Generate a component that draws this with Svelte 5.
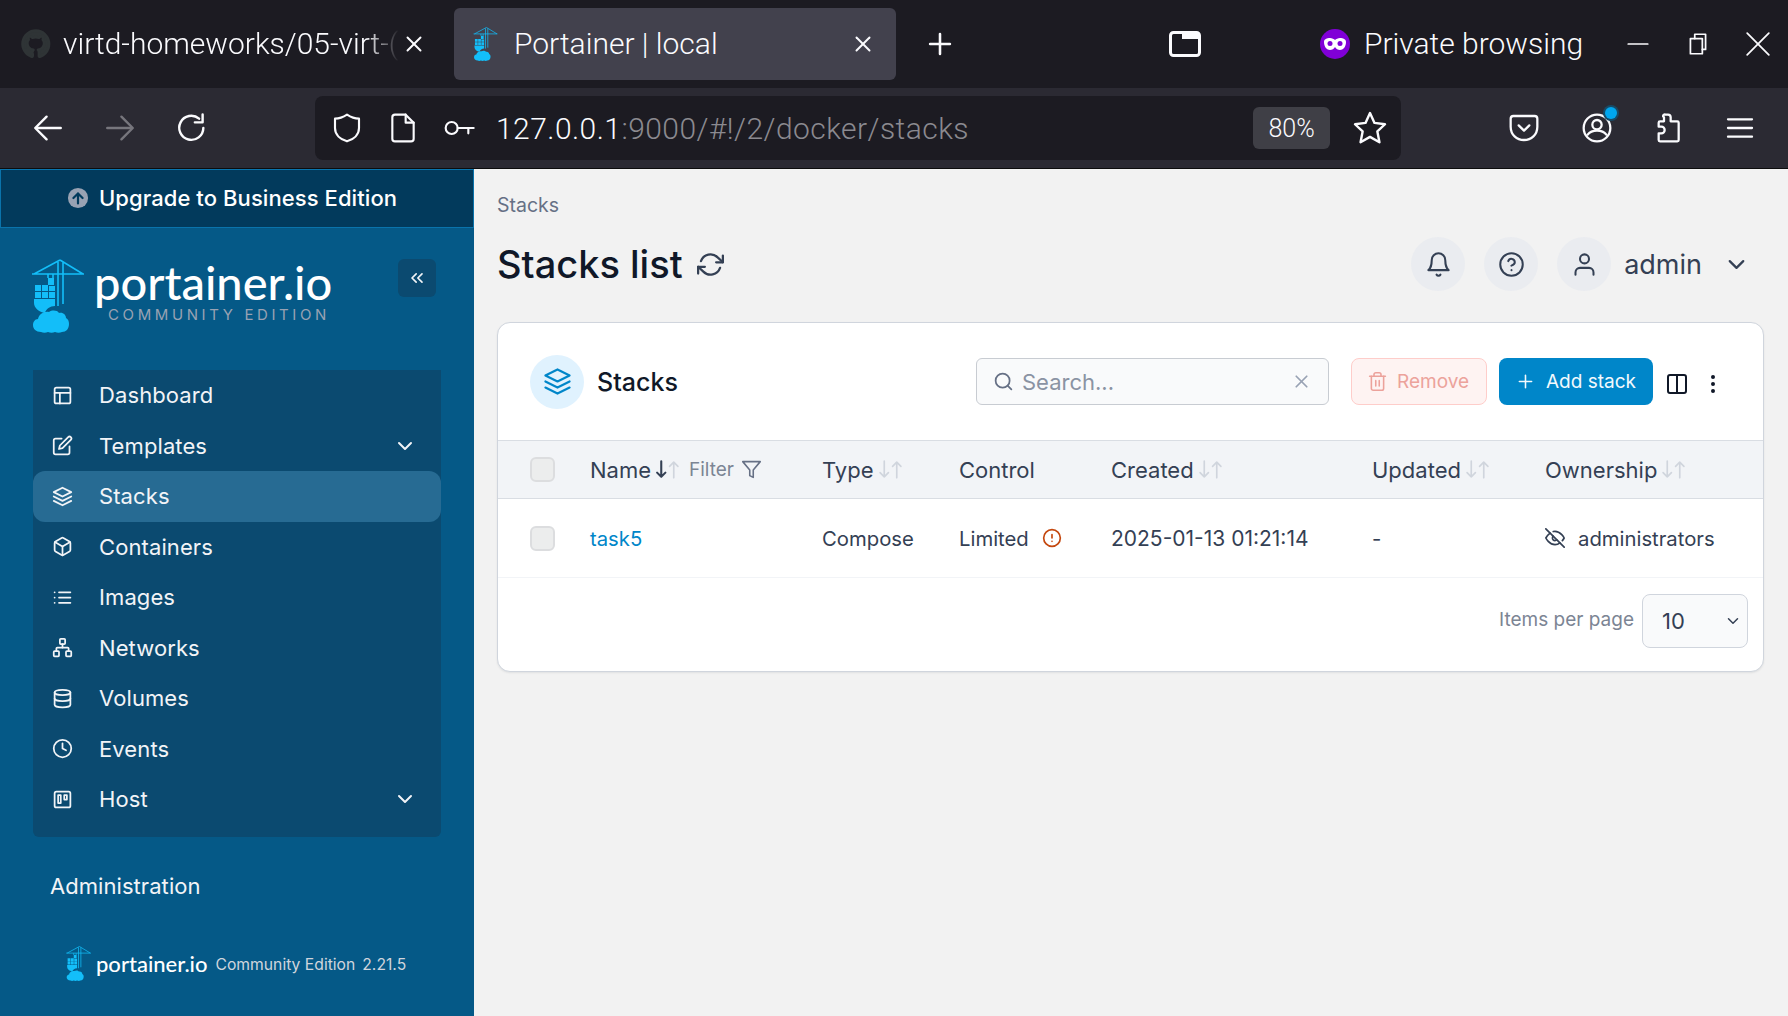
<script lang="ts">
const c = (x: number, y: number, r: number) => `M${x - r} ${y}a${r} ${r} 0 1 0 ${2 * r} 0a${r} ${r} 0 1 0 ${-2 * r} 0z`;
const box = 'M5 3h14a2 2 0 0 1 2 2v14a2 2 0 0 1-2 2H5a2 2 0 0 1-2-2V5a2 2 0 0 1 2-2z';

const icons: Record<string, string[]> = {
	layout: [box, 'M3 9h18', 'M9 21V9'],
	edit: ['M11 4H4a2 2 0 0 0-2 2v14a2 2 0 0 0 2 2h14a2 2 0 0 0 2-2v-7', 'M18.5 2.5a2.121 2.121 0 0 1 3 3L12 15l-4 1 1-4 9.5-9.5z'],
	layers: ['M12 2 2 7l10 5 10-5-10-5z', 'M2 17l10 5 10-5', 'M2 12l10 5 10-5'],
	box: ['M21 16V8a2 2 0 0 0-1-1.73l-7-4a2 2 0 0 0-2 0l-7 4A2 2 0 0 0 3 8v8a2 2 0 0 0 1 1.73l7 4a2 2 0 0 0 2 0l7-4A2 2 0 0 0 21 16z', 'M3.27 6.96 12 12.01l8.73-5.05', 'M12 22.08V12'],
	list: ['M8 6h13', 'M8 12h13', 'M8 18h13', 'M3 6h.01', 'M3 12h.01', 'M3 18h.01'],
	network: ['M17 16h4a1 1 0 0 1 1 1v4a1 1 0 0 1-1 1h-4a1 1 0 0 1-1-1v-4a1 1 0 0 1 1-1z', 'M3 16h4a1 1 0 0 1 1 1v4a1 1 0 0 1-1 1H3a1 1 0 0 1-1-1v-4a1 1 0 0 1 1-1z', 'M10 2h4a1 1 0 0 1 1 1v4a1 1 0 0 1-1 1h-4a1 1 0 0 1-1-1V3a1 1 0 0 1 1-1z', 'M5 16v-3a1 1 0 0 1 1-1h12a1 1 0 0 1 1 1v3', 'M12 12V8'],
	database: ['M12 2C7 2 3 3.3 3 5s4 3 9 3 9-1.3 9-3-4-3-9-3z', 'M21 12c0 1.66-4 3-9 3s-9-1.34-9-3', 'M3 5v14c0 1.66 4 3 9 3s9-1.34 9-3V5'],
	clock: [c(12, 12, 10), 'M12 6v6l4 2'],
	trello: [box, 'M7 7h3v9H7z', 'M14 7h3v5h-3z'],
	chevron: ['m6 9 6 6 6-6'],
	chevrons: ['m11 17-5-5 5-5', 'm18 17-5-5 5-5'],
	bell: ['M18 8A6 6 0 0 0 6 8c0 7-3 9-3 9h18s-3-2-3-9', 'M13.73 21a2 2 0 0 1-3.46 0'],
	help: [c(12, 12, 10), 'M9.09 9a3 3 0 0 1 5.83 1c0 2-3 3-3 3', 'M12 17h.01'],
	user: ['M20 21v-2a4 4 0 0 0-4-4H8a4 4 0 0 0-4 4v2', c(12, 7, 4)],
	search: [c(11, 11, 8), 'm21 21-4.35-4.35'],
	x: ['M18 6 6 18', 'm6 6 12 12'],
	trash: ['M3 6h18', 'M19 6v14a2 2 0 0 1-2 2H7a2 2 0 0 1-2-2V6', 'M8 6V4a2 2 0 0 1 2-2h4a2 2 0 0 1 2 2v2', 'M10 11v6', 'M14 11v6'],
	plus: ['M12 5v14', 'M5 12h14'],
	columns: [box, 'M12 3v18'],
	dots: [c(12, 5, 1), c(12, 12, 1), c(12, 19, 1)],
	filter: ['M22 3H2l8 9.46V19l4 2v-8.54L22 3z'],
	alert: [c(12, 12, 10), 'M12 8v4', 'M12 16h.01'],
	eyeoff: ['M17.94 17.94A10.07 10.07 0 0 1 12 20c-7 0-11-8-11-8a18.45 18.45 0 0 1 5.06-5.94M9.9 4.24A9.12 9.12 0 0 1 12 4c7 0 11 8 11 8a18.5 18.5 0 0 1-2.16 3.19m-6.72-1.07a3 3 0 1 1-4.24-4.24', 'M1 1l22 22'],
	refresh: ['M23 4v6h-6', 'M1 20v-6h6', 'M3.51 9a9 9 0 0 1 14.85-3.36L23 10M1 14l4.64 4.36A9 9 0 0 0 20.49 15'],
	// browser toolbar
	back: ['M21 12H4', 'M11 4l-8 8 8 8'],
	forward: ['M3 12h17', 'M13 4l8 8-8 8'],
	reload: ['M20 12a8.5 8.5 0 1 1-3-6.6', 'M19.5 2.5v5.5H14'],
	shield: ['M12 2c3 2 6 3 9 3v7c0 5-4 8.500-9 10-5-1.500-9-5-9-10V5c3 0 6-1 9-3z'],
	doc: ['M6 2h8l6 6v12a2 2 0 0 1-2 2H6a2 2 0 0 1-2-2V4a2 2 0 0 1 2-2z', 'M14 2v6h6'],
	key: [c(6.500, 12, 4.500), 'M11 12h12', 'M19 12v4'],
	star: ['M12 2l3 6.600 7 .9-5.100 4.800 1.400 7.200-6.300-3.600-6.300 3.600 1.400-7.200L2 9.500l7-.9z'],
	pocket: ['M4 3h16a2 2 0 0 1 2 2v6c0 6-4.500 10-10 10S2 17 2 11V5a2 2 0 0 1 2-2z', 'm8 10 4 4 4-4'],
	account: [c(12, 12, 10), c(12, 9.500, 3.500), 'M5 17c1.500-2 4-3 7-3s5.500 1 7 3'],
	puzzle: ['M10 2h2a2 2 0 0 1 2 2v3h5a1 1 0 0 1 1 1v13a1 1 0 0 1-1 1H6a1 1 0 0 1-1-1v-5h2a2.500 2.500 0 0 0 0-5H5V8a1 1 0 0 1 1-1h3V4a1 1 0 0 1 1-2z'],
	menu: ['M3 5.500h18', 'M3 12h18', 'M3 18.500h18'],
	restore: ['M5 7h11v14H5z', 'M9 7V3h10v14h-3'],
	minimize: ['M3 12h18'],
	bigx: ['M2 2l20 20', 'M22 2 2 22'],
	github: ['M12 2a10 10 0 0 0-3.200 19.500c.5.1.7-.2.7-.5v-1.700c-2.800.6-3.400-1.300-3.400-1.300-.5-1.200-1.100-1.500-1.100-1.500-.9-.6.1-.6.1-.6 1 .1 1.500 1 1.500 1 .9 1.500 2.300 1.100 2.900.8.1-.6.3-1.100.6-1.300-2.200-.3-4.600-1.100-4.600-4.900 0-1.100.4-2 1-2.700-.1-.3-.4-1.300.1-2.600 0 0 .8-.3 2.700 1a9.400 9.400 0 0 1 5 0c1.900-1.300 2.700-1 2.700-1 .5 1.300.2 2.300.1 2.600.6.7 1 1.600 1 2.700 0 3.800-2.300 4.600-4.600 4.900.4.300.7.900.7 1.900V21c0 .3.2.6.7.5A10 10 0 0 0 12 2z']
};

const nav = [
	{ label: 'Dashboard', icon: 'layout' },
	{ label: 'Templates', icon: 'edit', more: true },
	{ label: 'Stacks', icon: 'layers', active: true },
	{ label: 'Containers', icon: 'box' },
	{ label: 'Images', icon: 'list' },
	{ label: 'Networks', icon: 'network' },
	{ label: 'Volumes', icon: 'database' },
	{ label: 'Events', icon: 'clock' },
	{ label: 'Host', icon: 'trello', more: true }
];

const columns = [
	{ label: 'Name', sorted: true, filter: true },
	{ label: 'Type' },
	{ label: 'Control', plain: true },
	{ label: 'Created' },
	{ label: 'Updated' },
	{ label: 'Ownership' }
];
</script>

{#snippet icon(name: string, cls = '')}
	<svg class="icon {cls}" viewBox="0 0 24 24" fill="none" stroke="currentColor" stroke-linecap="round" stroke-linejoin="round">
		{#each icons[name] as d}<path {d} />{/each}
	</svg>
{/snippet}

{#snippet crane(cls: string)}
	<svg class={cls} viewBox="0 0 52 74" fill="none" stroke="#13bef9" stroke-width="1.600">
		<path d="M0 15h52M28 1 2 15M28 1l23 14M26 3v44M31 3v42M16 15v4M21 15v4" />
		<g fill="#13bef9" stroke="none">
			<path d="M16 19h6v7h-6zM3 26h6v6H3zM10 26h6v6h-6zM3 33h6v6H3zM10 33h6v6h-6zM17 33h6v6h-6zM17 27h6v5h-6z" />
			<path d="M2 40h21v7c-5 0-9 3-10 7-6-1-11-5-11-10z" />
			<path d="M9 73c-5 0-8-3-8-7 0-3 2-6 5-6 1-5 6-8 11-7 3-2 8-2 10 1 4-1 7 2 7 5 2 1 3 3 3 6 0 5-3 8-7 8-2 1-5 1-7 0-2 1-5 1-7 0-2 1-5 1-7 0z" />
		</g>
	</svg>
{/snippet}

{#snippet arrows(on: boolean)}
	<svg class="arrows" viewBox="0 0 24 20" fill="none" stroke-linecap="round" stroke-linejoin="round">
		<path d="M6 2v15M2 13l4 4 4-4" stroke={on ? '#344054' : '#d0d5dd'} stroke-width={on ? 2 : 1.600} />
		<path d="M18 18V3M14 7l4-4 4 4" stroke="#d0d5dd" stroke-width="1.600" />
	</svg>
{/snippet}

<div class="window">
	<header class="tabbar">
		<div class="tab first">
			<span class="gh">{@render icon('github')}</span>
			<span class="tab-title fade">virtd-homeworks/05-virt-(</span>
			{@render icon('x', 'tab-x')}
		</div>
		<div class="tab current">
			{@render crane('favicon')}
			<span class="tab-title">Portainer | local</span>
			{@render icon('x', 'tab-x')}
		</div>
		<span class="newtab">{@render icon('plus')}</span>
		<span class="alltabs">
			<svg viewBox="0 0 32 26"><rect x="1.500" y="1.500" width="29" height="23" rx="3" fill="none" stroke="#fbfbfe" stroke-width="3" /><rect x="13" y="2" width="17" height="6" fill="#fbfbfe" /></svg>
		</span>
		<span class="private">
			<svg class="mask" viewBox="0 0 30 30">
				<circle cx="15" cy="15" r="15" fill="#8000d7" />
				<path d="M4 13c0-3 3-4 6-4 2 0 4 1 5 2 1-1 3-2 5-2 3 0 6 1 6 4 0 5-3 8-6 8-2 0-4-1-5-3-1 2-3 3-5 3-3 0-6-3-6-8z" fill="#fff" />
				<circle cx="10" cy="14.500" r="2.500" fill="#8000d7" /><circle cx="20" cy="14.500" r="2.500" fill="#8000d7" />
			</svg>
			Private browsing
		</span>
		<div class="winctl">
			{@render icon('minimize')}
			{@render icon('restore')}
			{@render icon('bigx')}
		</div>
	</header>

	<nav class="toolbar">
		<span class="tb back">{@render icon('back')}</span>
		<span class="tb fwd">{@render icon('forward')}</span>
		<span class="tb reload">{@render icon('reload')}</span>
		<div class="urlbar">
			<span class="ub shield">{@render icon('shield')}</span>
			<span class="ub doc">{@render icon('doc')}</span>
			<span class="ub key">{@render icon('key')}</span>
			<span class="url">127.0.0.1<span class="dim">:9000/#!/2/docker/stacks</span></span>
			<span class="zoom">80%</span>
			<span class="ub star">{@render icon('star')}</span>
		</div>
		<div class="tb-right">
			{@render icon('pocket')}
			<span class="acct">{@render icon('account')}<i class="dot"></i></span>
			<span class="ext">{@render icon('puzzle')}</span>
			{@render icon('menu')}
		</div>
	</nav>

	<div class="content">
		<aside class="sidebar">
			<div class="upgrade">
				<svg class="up" viewBox="0 0 24 24">
					<circle cx="12" cy="12" r="11" fill="#98a2b3" />
					<path d="M12 18V7M7 12l5-5 5 5" fill="none" stroke="#023a5c" stroke-width="2.400" stroke-linecap="round" stroke-linejoin="round" />
				</svg>
				Upgrade to Business Edition
			</div>

			<div class="brand">
				{@render crane('crane')}
				<div class="wordmark">
					<div class="word">portainer.io</div>
					<div class="edition">COMMUNITY EDITION</div>
				</div>
				<span class="collapse">{@render icon('chevrons')}</span>
			</div>

			<ul class="nav">
				{#each nav as item}
					<li class:active={item.active}>
						{@render icon(item.icon)}
						<span>{item.label}</span>
						{#if item.more}{@render icon('chevron', 'more')}{/if}
					</li>
				{/each}
			</ul>

			<div class="admin">Administration</div>

			<div class="foot">
				{@render crane('crane-sm')}
				<span class="foot-word">portainer.io</span>
				<span class="foot-ver">Community Edition</span>
				<span class="foot-ver">2.21.5</span>
			</div>
		</aside>

		<main class="main">
			<div class="crumb">Stacks</div>
			<div class="pagehead">
				<h1>Stacks list</h1>
				<span class="refresh">{@render icon('refresh')}</span>
				<div class="userbar">
					<span class="round">{@render icon('bell')}</span>
					<span class="round">{@render icon('help')}</span>
					<span class="round">{@render icon('user')}</span>
					<span class="uname">admin</span>
					<span class="uchev">{@render icon('chevron')}</span>
				</div>
			</div>

			<section class="card">
				<div class="card-head">
					<span class="badge">{@render icon('layers')}</span>
					<h2>Stacks</h2>
					<label class="search">
						{@render icon('search')}
						<input placeholder="Search..." />
						{@render icon('x', 'clear')}
					</label>
					<button class="btn remove">{@render icon('trash')}Remove</button>
					<button class="btn add">{@render icon('plus')}Add stack</button>
					<span class="tool cols">{@render icon('columns')}</span>
					<span class="tool dots">{@render icon('dots')}</span>
				</div>

				<div class="row thead">
					<span class="check"></span>
					{#each columns as col}
						<span class="th">
							{col.label}
							{#if !col.plain}{@render arrows(!!col.sorted)}{/if}
							{#if col.filter}
								<span class="filter">Filter {@render icon('filter')}</span>
							{/if}
						</span>
					{/each}
				</div>

				<div class="row tbody">
					<span class="check"></span>
					<a class="link" href="#stack">task5</a>
					<span>Compose</span>
					<span class="limited">Limited {@render icon('alert')}</span>
					<span class="date">2025-01-13 01:21:14</span>
					<span>-</span>
					<span class="owner">{@render icon('eyeoff')}administrators</span>
				</div>

				<div class="card-foot">
					<span class="ipp">Items per page</span>
					<span class="select">10 {@render icon('chevron')}</span>
				</div>
			</section>
		</main>
	</div>
</div>

<style>
	:global(body) {
		margin: 0;
		background: #f2f2f2;
	}
	* {
		box-sizing: border-box;
	}
	.window {
		width: 1788px;
		height: 1016px;
		display: flex;
		flex-direction: column;
		overflow: hidden;
		font-family: Inter, 'Liberation Sans', sans-serif;
	}
	.icon {
		display: block;
		width: 24px;
		height: 24px;
		flex: none;
		stroke-width: 2;
	}

	/* browser chrome */
	.tabbar {
		height: 88px;
		flex: none;
		background: #1c1b22;
		color: #fbfbfe;
		display: flex;
		align-items: center;
		font-family: Roboto, sans-serif;
		font-weight: 300;
		font-size: 30px;
	}
	.tab {
		height: 72px;
		display: flex;
		align-items: center;
		margin-top: -1px;
	}
	.tab.first {
		width: 450px;
		padding: 0 0 0 20px;
	}
	.tab.current {
		width: 442px;
		margin-left: 4px;
		padding: 0 20px 0 18px;
		background: #42414d;
		border-radius: 6px;
	}
	.gh {
		width: 32px;
		color: #2f3436;
	}
	.gh :global(path) {
		fill: currentColor;
	}
	.gh :global(.icon) {
		width: 32px;
		height: 32px;
	}
	.favicon {
		width: 27px;
		height: 34px;
		flex: none;
	}
	.tab-title {
		margin-left: 15px;
		white-space: nowrap;
		flex: 1;
		overflow: hidden;
	}
	.fade {
		margin-left: 11px;
		-webkit-mask-image: linear-gradient(to right, #000 90%, transparent);
		mask-image: linear-gradient(to right, #000 90%, transparent);
	}
	.tab :global(.tab-x) {
		width: 26px;
		height: 26px;
		stroke-width: 1.800;
	}
	.first :global(.tab-x) {
		margin: 0 23px 0 2px;
	}
	.newtab {
		margin-left: 27px;
	}
	.newtab :global(.icon) {
		width: 34px;
		height: 34px;
		stroke-width: 1.800;
	}
	.alltabs {
		margin-left: 212px;
		width: 32px;
		height: 26px;
	}
	.alltabs svg {
		display: block;
	}
	.private {
		margin: -2px 0 0 119px;
		display: flex;
		align-items: center;
		gap: 14px;
		white-space: nowrap;
	}
	.mask {
		width: 30px;
		height: 30px;
		margin-top: 2px;
	}
	.winctl {
		margin-left: auto;
		display: flex;
		gap: 34px;
		padding-right: 17px;
	}
	.winctl :global(.icon) {
		width: 26px;
		height: 26px;
		stroke-width: 1.600;
	}

	.toolbar {
		height: 81px;
		flex: none;
		background: #2b2a33;
		color: #fbfbfe;
		display: flex;
		align-items: center;
		border-bottom: 1px solid #0c0c0d;
	}
	.tb {
		width: 34px;
		margin-left: 31px;
	}
	.tb.fwd {
		margin-left: 38px;
		color: #77767d;
	}
	.tb.reload {
		margin-left: 38px;
	}
	.tb :global(.icon) {
		width: 34px;
		height: 34px;
		stroke-width: 1.700;
	}
	.urlbar {
		width: 1086px;
		height: 64px;
		margin-left: 106px;
		background: #1c1b22;
		border-radius: 8px;
		display: flex;
		align-items: center;
		padding: 0 13px 0 16px;
	}
	.ub :global(.icon) {
		width: 32px;
		height: 32px;
		stroke-width: 1.600;
	}
	.ub.doc,
	.ub.key {
		margin-left: 24px;
	}
	.url {
		margin-left: 21px;
		font-family: Roboto, sans-serif;
		font-weight: 300;
		font-size: 30px;
		letter-spacing: 0.450px;
		white-space: nowrap;
		flex: 1;
	}
	.dim {
		color: #8b8a90;
	}
	.zoom {
		width: 77px;
		height: 42px;
		border-radius: 6px;
		background: #3f3f46;
		display: flex;
		align-items: center;
		justify-content: center;
		font-family: Roboto, sans-serif;
		font-weight: 300;
		font-size: 25px;
	}
	.ub.star {
		margin-left: 22px;
	}
	.ub.star :global(.icon) {
		width: 36px;
		height: 36px;
	}
	.tb-right {
		margin-left: auto;
		display: flex;
		align-items: center;
		gap: 41px;
		padding-right: 32px;
	}
	.tb-right :global(.icon) {
		width: 32px;
		height: 32px;
		stroke-width: 1.700;
	}
	.acct {
		position: relative;
		margin-right: -2px;
	}
	.ext {
		margin-right: -1px;
	}
	.dot {
		position: absolute;
		right: -4px;
		top: -5px;
		width: 12px;
		height: 12px;
		border-radius: 50%;
		background: #00a6ee;
		box-shadow: 0 0 0 2px #174a66;
	}

	/* app */
	.content {
		flex: 1;
		min-height: 0;
		display: flex;
	}
	.sidebar {
		width: 474px;
		flex: none;
		background: #055987;
		color: #f2f4f7;
		display: flex;
		flex-direction: column;
	}
	.upgrade {
		height: 59px;
		flex: none;
		background: #023a5c;
		border: 1px solid #0a73ab;
		display: flex;
		align-items: center;
		justify-content: center;
		gap: 10px;
		padding: 0 10px 2px 0;
		font-size: 22px;
		font-weight: 500;
		letter-spacing: 0.080px;
		color: #fff;
	}
	.up {
		width: 22px;
		height: 22px;
	}
	.brand {
		height: 142px;
		flex: none;
		display: flex;
		align-items: flex-start;
		padding: 31px 0 0 32px;
		position: relative;
	}
	.crane {
		width: 52px;
		height: 74px;
		flex: none;
	}
	.wordmark {
		margin-left: 10px;
		margin-top: 0;
	}
	.word {
		font-family: Lato, sans-serif;
		font-weight: 500;
		font-size: 47px;
		line-height: 46px;
		color: #fff;
	}
	.edition {
		margin-left: 14px;
		margin-top: 2px;
		font-size: 15px;
		line-height: 16px;
		letter-spacing: 3.600px;
		color: #98a2b3;
	}
	.collapse {
		position: absolute;
		left: 398px;
		top: 31px;
		width: 38px;
		height: 38px;
		border-radius: 6px;
		background: #0b4a70;
		display: flex;
		align-items: center;
		justify-content: center;
	}
	.collapse :global(.icon) {
		width: 20px;
		height: 20px;
	}
	.nav {
		list-style: none;
		margin: 0 0 0 33px;
		padding: 0 0 12px;
		width: 408px;
		background: #0b4a70;
		border-radius: 0 0 6px 6px;
	}
	.nav li {
		height: 50.500px;
		display: flex;
		align-items: center;
		padding: 0 24px 0 19px;
		font-size: 22px;
		color: #f2f4f7;
		border-radius: 12px;
	}
	.nav li.active {
		background: #276b93;
	}
	.nav li span {
		margin-left: 26px;
		flex: 1;
		letter-spacing: 0.100px;
	}
	.nav li :global(.icon) {
		width: 21px;
		height: 21px;
		stroke-width: 2;
	}
	.nav li :global(.more) {
		width: 24px;
		height: 24px;
	}
	.admin {
		margin: 33px 0 0 50px;
		font-size: 22px;
		letter-spacing: 0.060px;
		line-height: 32px;
		color: #f2f4f7;
	}
	.foot {
		margin: 44px 0 0 66px;
		display: flex;
		align-items: center;
		white-space: nowrap;
	}
	.crane-sm {
		width: 25px;
		height: 35px;
		flex: none;
	}
	.foot-word {
		margin-left: 5px;
		font-family: Lato, sans-serif;
		font-weight: 500;
		font-size: 22px;
		color: #fff;
	}
	.foot-ver {
		margin: 3px 0 0 7px;
		font-size: 15.700px;
		color: #d0d5dd;
	}
	.foot-word + .foot-ver {
		margin-left: 8px;
	}

	.main {
		flex: 1;
		min-width: 0;
		background: #f2f2f2;
		padding: 0 24px 0 23px;
	}
	.crumb {
		margin-top: 24px;
		font-size: 19.500px;
		line-height: 24px;
		color: #667085;
	}
	.pagehead {
		display: flex;
		align-items: center;
		height: 54px;
		margin-top: 20px;
	}
	h1 {
		margin: 0;
		font-size: 38px;
		font-weight: 500;
		color: #101828;
		white-space: nowrap;
	}
	.refresh {
		margin-left: 14px;
		color: #344054;
	}
	.refresh :global(.icon) {
		width: 27px;
		height: 27px;
	}
	.userbar {
		margin-left: auto;
		display: flex;
		align-items: center;
		color: #344054;
		padding-right: 14px;
	}
	.round {
		width: 54px;
		height: 54px;
		border-radius: 50%;
		background: #eaecf0;
		display: flex;
		align-items: center;
		justify-content: center;
		margin-left: 19px;
	}
	.round :global(.icon) {
		width: 27px;
		height: 27px;
		stroke-width: 1.800;
	}
	.uname {
		margin-left: 13px;
		font-size: 27px;
	}
	.uchev {
		margin-left: 21px;
	}
	.uchev :global(.icon) {
		width: 27px;
		height: 27px;
	}

	.card {
		margin-top: 31px;
		height: 350px;
		background: #fff;
		border: 1px solid #d0d5dd;
		border-radius: 13px;
		box-shadow: 0 1px 2px rgba(16, 24, 40, 0.08);
		display: flex;
		flex-direction: column;
	}
	.card-head {
		height: 117px;
		flex: none;
		display: flex;
		align-items: center;
		padding-left: 32px;
	}
	.badge {
		width: 54px;
		height: 54px;
		border-radius: 50%;
		background: #e0f2fe;
		color: #0086c9;
		display: flex;
		align-items: center;
		justify-content: center;
	}
	.badge :global(.icon) {
		width: 29px;
		height: 29px;
		stroke-width: 1.800;
	}
	h2 {
		margin: 0 0 0 13px;
		font-size: 25px;
		font-weight: 500;
		color: #101828;
		width: 379px;
	}
	.search {
		width: 353px;
		height: 47px;
		background: #f9fafb;
		border: 1px solid #c8ccd2;
		border-radius: 6px;
		display: flex;
		align-items: center;
		padding: 0 16px 0 16px;
		color: #667085;
	}
	.search :global(.icon) {
		width: 21px;
		height: 21px;
	}
	.search input {
		flex: 1;
		min-width: 0;
		border: 0;
		outline: 0;
		background: transparent;
		font: inherit;
		font-size: 22px;
		padding: 0 0 0 8px;
	}
	.search input::placeholder {
		color: #8a93a3;
		opacity: 1;
	}
	.search :global(.clear) {
		width: 21px;
		height: 21px;
		color: #98a2b3;
	}
	.btn {
		height: 47px;
		font: inherit;
		font-size: 19px;
		display: flex;
		align-items: center;
		border-radius: 8px;
		margin: 0;
	}
	.btn :global(.icon) {
		width: 21px;
		height: 21px;
		stroke-width: 1.800;
	}
	.remove {
		width: 136px;
		margin-left: 22px;
		padding: 0 0 0 15px;
		gap: 9px;
		background: #fef3f2;
		border: 1px solid #fecdca;
		color: #eca29b;
	}
	.add {
		width: 154px;
		margin-left: 12px;
		padding: 0 0 0 16px;
		gap: 10px;
		background: #0086c9;
		border: 0;
		color: #f2f9fd;
	}
	.tool {
		color: #101828;
	}
	.tool.cols,
	.tool.dots {
		margin-left: 12px;
		margin-top: 4px;
	}
	.row {
		display: grid;
		grid-template-columns: 60px 232px 137px 152px 261px 173px 1fr;
		align-items: center;
		padding-left: 32px;
		font-size: 20.300px;
		color: #344054;
	}
	.thead {
		height: 59px;
		flex: none;
		background: #f2f4f7;
		border-block: 1px solid #d9dde3;
		font-size: 22px;
	}
	.check {
		display: block;
		width: 25px;
		height: 25px;
		background: #eceded;
		border: 2px solid #dcdddf;
		border-radius: 6px;
	}
	.th {
		display: flex;
		align-items: center;
		white-space: nowrap;
	}
	.arrows {
		width: 25px;
		height: 21px;
		margin-left: 4px;
	}
	.filter {
		margin-left: 9px;
		display: flex;
		align-items: center;
		gap: 7px;
		font-size: 19px;
		color: #7c8594;
	}
	.filter :global(.icon) {
		width: 21px;
		height: 21px;
		stroke-width: 1.800;
		color: #667085;
	}
	.tbody {
		height: 79px;
		flex: none;
		border-bottom: 1px solid #f2f4f7;
		white-space: nowrap;
	}
	.date {
		font-size: 21px;
	}
	.link {
		color: #0086c9;
		text-decoration: none;
	}
	.limited {
		display: flex;
		align-items: center;
		gap: 13px;
	}
	.limited :global(.icon) {
		width: 20px;
		height: 20px;
		color: #c4470e;
	}
	.owner {
		display: flex;
		align-items: center;
		gap: 13px;
	}
	.owner :global(.icon) {
		width: 20px;
		height: 20px;
	}
	.card-foot {
		flex: 1;
		display: flex;
		align-items: center;
		justify-content: flex-end;
		padding: 0 15px 7px 0;
		gap: 8px;
	}
	.ipp {
		font-size: 19px;
		color: #7c8594;
		padding-bottom: 4px;
	}
	.select {
		width: 106px;
		height: 54px;
		background: #f9fafb;
		border: 1px solid #d0d5dd;
		border-radius: 8px;
		display: flex;
		align-items: center;
		justify-content: space-between;
		padding: 0 5px 0 19px;
		font-size: 22px;
		color: #344054;
	}
	.select :global(.icon) {
		width: 18px;
		height: 18px;
	}
</style>
